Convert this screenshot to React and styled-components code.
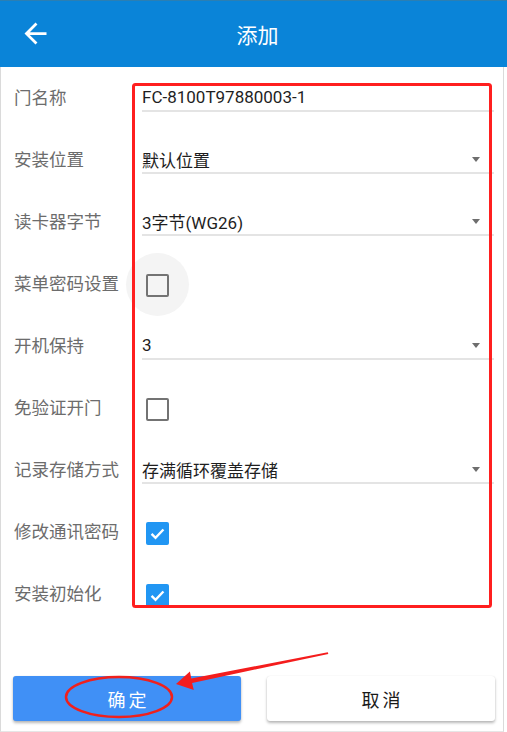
import React from 'react'
import styled, { createGlobalStyle } from 'styled-components'

const GlobalStyle = createGlobalStyle`
  html, body {
    margin: 0;
    padding: 0;
    background: #ffffff;
  }
  body {
    font-family: Roboto, "Noto Sans CJK SC", sans-serif;
  }
`

const Page = styled.div`
  position: relative;
  width: 507px;
  height: 732px;
  overflow: hidden;
  display: flex;
  flex-direction: column;
  background: #fff;
`

const Header = styled.header`
  height: 66px;
  border-top: 1px solid #2b7fb3;
  background: #0a84d8;
  display: flex;
  align-items: center;
  justify-content: center;
  position: relative;
  flex-shrink: 0;
`

const BackButton = styled.button`
  position: absolute;
  left: 19px;
  top: 16px;
  width: 33px;
  height: 33px;
  padding: 0;
  border: none;
  background: transparent;
  display: flex;
`

const Title = styled.h1`
  margin: 0 0 0 8px;
  color: #fff;
  font-size: 21px;
  font-weight: 400;
  font-family: "Noto Sans CJK SC", sans-serif;
`

const Body = styled.div`
  flex: 1;
  display: flex;
  flex-direction: column;
  margin-right: 3px;
  border-left: 1px solid #dadada;
  border-right: 1px solid #dadada;
  border-bottom: 1px solid #e6e6e6;
`

const Form = styled.div`
  display: flex;
  flex-direction: column;
`

const Row = styled.div`
  display: grid;
  grid-template-columns: 128px 1fr;
  align-items: center;
  height: 62px;
  padding: 0 9px 0 13px;
`

const Label = styled.span`
  font-family: "Noto Sans CJK SC", sans-serif;
  font-size: 17.5px;
  color: #6c6c6c;
  white-space: nowrap;
  margin-top: -3px;
`

const Field = styled.div`
  position: relative;
  height: 26px;
  display: flex;
  align-items: center;
  border-bottom: 2px solid #e4e4e4;
  font-size: 17px;
  color: #1e1e1e;
  font-family: Roboto, "Noto Sans CJK SC", sans-serif;
`

const Caret = styled.span`
  position: absolute;
  right: 14px;
  top: 11px;
  width: 0;
  height: 0;
  border-left: 4.5px solid transparent;
  border-right: 4.5px solid transparent;
  border-top: 5px solid #6e6e6e;
`

const CheckWrap = styled.div`
  position: relative;
  width: 23px;
  height: 23px;
  margin: 2px 0 0 4px;
  &::before {
    content: '';
    display: ${p => (p.$focus ? 'block' : 'none')};
    position: absolute;
    left: -20px;
    top: -21px;
    width: 63px;
    height: 63px;
    border-radius: 50%;
    background: #f4f4f4;
  }
`

const Box = styled.div`
  position: relative;
  box-sizing: border-box;
  width: 23px;
  height: 23px;
  border-radius: 2px;
  border: ${p => (p.$checked ? 'none' : '2.5px solid #737373')};
  background: ${p => (p.$checked ? '#2196f3' : 'transparent')};
  display: flex;
  align-items: center;
  justify-content: center;
`

const Actions = styled.div`
  margin-top: auto;
  display: flex;
  gap: 26px;
  padding: 0 8px 10px 12px;
`

const Button = styled.button`
  flex: 1;
  height: 45px;
  border: none;
  border-radius: 3px;
  font-family: "Noto Sans CJK SC", sans-serif;
  font-size: 18px;
  letter-spacing: 3px;
  text-indent: 3px;
  background: ${p => (p.$primary ? '#4090f6' : '#ffffff')};
  color: ${p => (p.$primary ? '#ffffff' : '#1a1a1a')};
  box-shadow: 0 2px 3px rgba(0, 0, 0, 0.28), 0 0 1px rgba(0, 0, 0, 0.12);
`

const Overlay = styled.svg`
  position: absolute;
  left: 0;
  top: 0;
  pointer-events: none;
`

const rows = [
  { label: '门名称', type: 'text', value: 'FC-8100T97880003-1' },
  { label: '安装位置', type: 'select', value: '默认位置' },
  { label: '读卡器字节', type: 'select', value: '3字节(WG26)' },
  { label: '菜单密码设置', type: 'check', checked: false, focus: true },
  { label: '开机保持', type: 'select', value: '3' },
  { label: '免验证开门', type: 'check', checked: false },
  { label: '记录存储方式', type: 'select', value: '存满循环覆盖存储' },
  { label: '修改通讯密码', type: 'check', checked: true },
  { label: '安装初始化', type: 'check', checked: true },
]

function Check({ checked, focus }) {
  return (
    <CheckWrap $focus={focus}>
      <Box $checked={checked}>
        {checked && (
          <svg width="19" height="19" viewBox="0 0 24 24">
            <path d="M4.5 12.5l5 5 10-10.5" fill="none" stroke="#fff" strokeWidth="3" />
          </svg>
        )}
      </Box>
    </CheckWrap>
  )
}

export default function App() {
  return (
    <Page>
      <GlobalStyle />
      <Header>
        <BackButton>
          <svg width="33" height="33" viewBox="0 0 24 24">
            <path d="M20 11H7.83l5.59-5.59L12 4l-8 8 8 8 1.41-1.41L7.83 13H20v-2z" fill="#fff" />
          </svg>
        </BackButton>
        <Title>添加</Title>
      </Header>
      <Body>
        <Form>
          {rows.map(r => (
            <Row key={r.label}>
              <Label>{r.label}</Label>
              {r.type === 'check' ? (
                <Check checked={r.checked} focus={r.focus} />
              ) : (
                <Field>
                  {r.value}
                  {r.type === 'select' && <Caret />}
                </Field>
              )}
            </Row>
          ))}
        </Form>
        <Actions>
          <Button $primary>确定</Button>
          <Button>取消</Button>
        </Actions>
      </Body>
      <Overlay width="507" height="732" viewBox="0 0 507 732">
        <rect x="133.5" y="84.5" width="357" height="522" rx="2" fill="none" stroke="#ff1f1f" strokeWidth="3" />
        <ellipse cx="119" cy="697" rx="53" ry="20" fill="none" stroke="#f0201c" strokeWidth="2.5" />
        <polygon
          points="176,684 189.9,671.5 191.3,678.6 327.8,652.2 328.3,653.9 192.1,683 193.8,690"
          fill="#f41d1d"
        />
      </Overlay>
    </Page>
  )
}
